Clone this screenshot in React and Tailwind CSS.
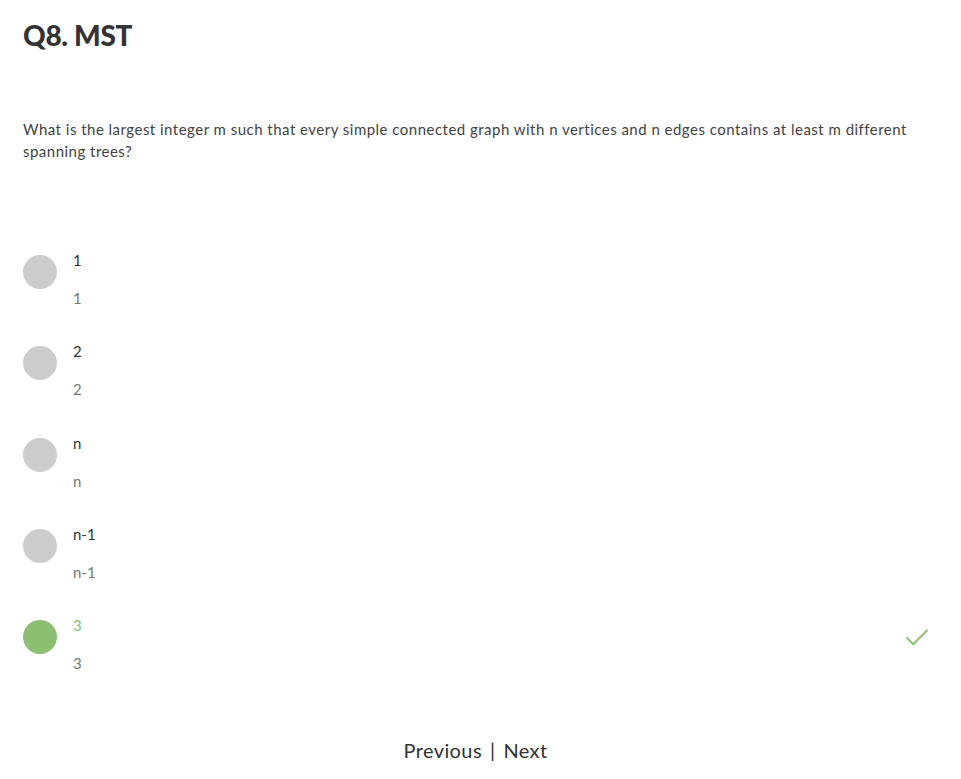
import { Check } from 'lucide-react';

const OPTIONS = [
  { label: '1', hint: '1' },
  { label: '2', hint: '2' },
  { label: 'n', hint: 'n' },
  { label: 'n-1', hint: 'n-1' },
  { label: '3', hint: '3', correct: true },
];

const Option = ({ option }) => (
  <div className="flex items-start h-[91.25px]">
    <div
      className={`w-[34px] h-[34px] rounded-full shrink-0 mt-[6px] ${
        option.correct ? 'bg-[#8cbf72]' : 'bg-[#cccccc]'
      }`}
    />
    <div className="ml-4 flex-1">
      <p className={`text-[15px] leading-[22px] ${option.correct ? 'text-[#8cbf72]' : 'text-[#333]'}`}>
        {option.label}
      </p>
      <p className="text-[15px] leading-[22px] mt-4 text-[#777]">{option.hint}</p>
    </div>
    {option.correct && (
      <Check size={30} strokeWidth={1.5} className="text-[#8cbf72] mt-[9px] mr-[6px]" />
    )}
  </div>
);

export default function App() {
  return (
    <div className="min-h-screen bg-white px-[23px] font-['Lato','Open_Sans',sans-serif] text-[#333]">
      {/* Title */}
      <h1 className="pt-[16px] text-[28px] leading-[38px] font-black tracking-[-0.3px] text-[#333]">Q8. MST</h1>

      {/* Question */}
      <p className="mt-[64px] text-[15px] leading-[22px] tracking-[0.48px] text-[#444]">
        What is the largest integer m such that every simple connected graph with n vertices and n edges contains at least m different spanning trees?
      </p>

      {/* Options */}
      <div className="mt-[87px]">
        {OPTIONS.map(o => (
          <Option key={o.label} option={o} />
        ))}
      </div>

      {/* Pager */}
      <div className="flex justify-center items-center gap-2 text-[20px] tracking-[0.4px] text-[#333] pt-[30px] pb-4 pr-[10px]">
        <button>Previous</button>
        <span>|</span>
        <button>Next</button>
      </div>
    </div>
  );
}
